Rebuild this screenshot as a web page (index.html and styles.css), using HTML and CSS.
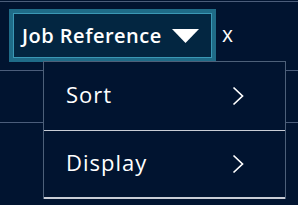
FILE: index.html
```html
<!DOCTYPE html>
<html lang="en">
<head>
  <meta charset="UTF-8" />
  <meta name="viewport" content="width=device-width, initial-scale=1" />
  <title>Job list</title>
  <link rel="stylesheet" href="styles.css">
</head>
<body>

  <div class="rule"></div>

  <div class="toolbar">
    <button class="filter">
      <span>Job Reference</span>
      <svg class="caret" width="27" height="14" viewBox="0 0 27 14"><polygon points="0,0 27,0 13.5,14" fill="#fff"/></svg>
    </button>
    <span class="clear">x</span>

    <div class="menu">
      <div class="item">
        <span>Sort</span>
        <svg width="12" height="20" viewBox="0 0 12 20"><polyline points="1.5,1.5 10.5,10 1.5,18.5" fill="none" stroke="#fff" stroke-width="1.7"/></svg>
      </div>
      <div class="item">
        <span>Display</span>
        <svg width="12" height="20" viewBox="0 0 12 20"><polyline points="1.5,1.5 10.5,10 1.5,18.5" fill="none" stroke="#fff" stroke-width="1.7"/></svg>
      </div>
    </div>
  </div>

  <div class="rows">
    <div class="row"></div>
    <div class="row"></div>
  </div>

</body>
</html>
```

FILE: styles.css
```css
body {
  margin: 0;
  min-height: 205px;
  background: #011430;
  color: #fff;
  font-family: "Open Sans", sans-serif;
}
.rule {
  margin-top: 1px;
  height: 1px;
  background: #4b5d7a;
}
.toolbar {
  position: relative;
  display: flex;
  align-items: center;
  padding: 7px 9px 8px;
}
.filter {
  display: flex;
  align-items: center;
  gap: 10px;
  box-sizing: border-box;
  width: 207px;
  height: 53px;
  padding: 0 12px 0 9px;
  background: #032641;
  border: 4px solid #1f6b87;
  box-shadow: inset 0 0 0 1px #3b98b5;
  color: #fff;
  font-family: "Open Sans", sans-serif;
  font-weight: 600;
  font-size: 20px;
  letter-spacing: 0.5px;
  white-space: nowrap;
}
.caret {
  flex: none;
  margin-top: 1px;
}
.clear {
  margin-left: 6px;
  font-size: 21px;
  line-height: 1;
  margin-top: -3px;
}
.menu {
  position: absolute;
  left: 43px;
  top: 59px;
  width: 243px;
  box-sizing: border-box;
  border: 1px solid #4d6079;
  border-bottom: none;
  background: #011430;
  z-index: 2;
}
.item {
  display: flex;
  align-items: center;
  justify-content: space-between;
  box-sizing: border-box;
  height: 69px;
  padding: 0 41px 0 22px;
  border-bottom: 1px solid #c9cdd6;
  font-size: 22px;
  letter-spacing: 1px;
}
.item + .item {
  height: 68px;
  border-bottom: 2px solid #c9cdd6;
}
.item span {
  margin-top: -5px;
}
.rows .row {
  height: 51px;
  border-top: 1px solid #4b5d7a;
}
```
